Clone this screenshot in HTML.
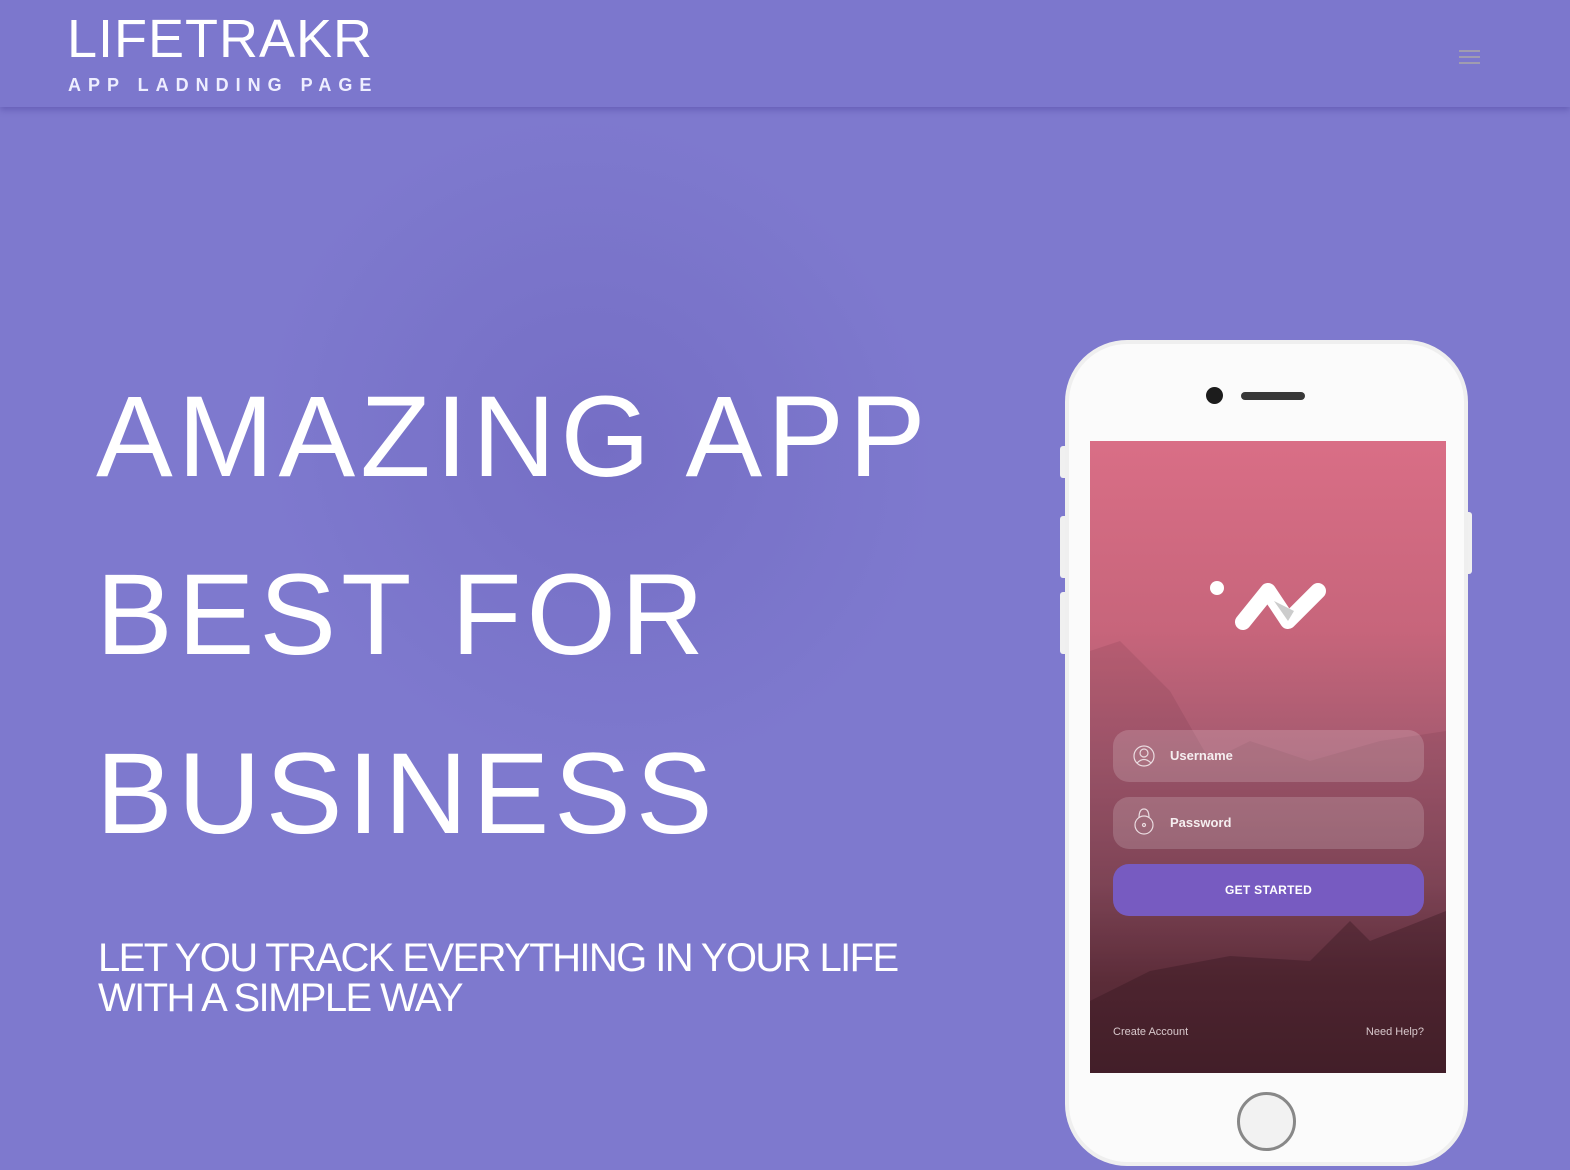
<!DOCTYPE html>
<html><head><meta charset="utf-8"><style>
*{margin:0;padding:0;box-sizing:border-box}
html,body{width:1570px;height:1170px;overflow:hidden}
body{background:#7e79ce;font-family:"Liberation Sans",sans-serif;position:relative;color:#fff}
.hdr{position:absolute;left:0;top:0;width:1570px;height:107px;background:#7c77cd;box-shadow:0 3px 6px rgba(60,50,140,.35)}
.logo{position:absolute;left:67px;top:8px;font-size:54px;letter-spacing:1px;font-weight:400}
.sub{position:absolute;left:68px;top:75px;font-size:18px;font-weight:700;letter-spacing:7px;color:#eef}
.ham{position:absolute;left:1459px;top:50px;width:21px}
.ham i{display:block;height:2px;background:#a09cb0;margin-bottom:4px}
.glow{position:absolute;left:250px;top:120px;width:700px;height:650px;background:radial-gradient(ellipse at center,rgba(100,90,180,.35),rgba(126,121,206,0) 70%);transform:rotate(35deg)}
.h1{position:absolute;left:96px;font-size:115px;letter-spacing:5px;font-weight:400;line-height:1;white-space:nowrap}
.p{position:absolute;left:98px;top:938px;font-size:40px;line-height:40px;letter-spacing:-1.6px}
.phone{position:absolute;left:1065px;top:340px;width:403px;height:826px;background:#fbfbfb;border-radius:62px;border:4px solid #efefef}
.btn-side{position:absolute;background:#f0f0f0;border-radius:3px}
.screen{position:absolute;left:1090px;top:441px;width:356px;height:632px;background:linear-gradient(#d96e86 0%,#c7657b 30%,#a45a6f 50%,#84495b 70%,#5e2f3b 85%,#4c2530 100%);overflow:hidden}
.field{position:absolute;left:23px;width:311px;height:52px;border-radius:16px;background:rgba(255,255,255,.17);font-size:13px;font-weight:700;color:#f5eef0}
.field span{position:absolute;left:57px;top:18px}
.gs{position:absolute;left:23px;top:423px;width:311px;height:52px;border-radius:16px;background:#775bc1;font-size:12px;font-weight:700;text-align:center;line-height:52px;letter-spacing:.3px}
.ft{position:absolute;top:585px;font-size:11px;color:#d8c8cc}
</style></head><body>
<div class="glow"></div>
<div class="hdr">
<div class="logo">LIFETRAKR</div>
<div class="sub">APP LADNDING PAGE</div>
<div class="ham"><i></i><i></i><i></i></div>
</div>
<div class="h1" style="top:380px">AMAZING APP</div>
<div class="h1" style="top:558px">BEST FOR</div>
<div class="h1" style="top:737px">BUSINESS</div>
<div class="p">LET YOU TRACK EVERYTHING IN YOUR LIFE<br>WITH A SIMPLE WAY</div>

<div class="btn-side" style="left:1060px;top:446px;width:8px;height:32px"></div>
<div class="btn-side" style="left:1060px;top:516px;width:8px;height:62px"></div>
<div class="btn-side" style="left:1060px;top:592px;width:8px;height:62px"></div>
<div class="btn-side" style="left:1465px;top:512px;width:7px;height:62px"></div>
<div class="phone"></div>
<div style="position:absolute;left:1206px;top:387px;width:17px;height:17px;border-radius:50%;background:#1c1c1c"></div>
<div style="position:absolute;left:1241px;top:392px;width:64px;height:8px;border-radius:4px;background:#383838"></div>
<div style="position:absolute;left:1237px;top:1092px;width:59px;height:59px;border-radius:50%;border:3px solid #888;background:#f2f2f2"></div>

<div class="screen">
<svg width="356" height="632" style="position:absolute;left:0;top:0">
<path d="M0 210 L30 200 L80 250 L120 320 L160 300 L220 320 L290 300 L356 290 L356 632 L0 632Z" fill="rgba(80,30,50,.12)"/>
<path d="M0 560 L60 530 L140 515 L220 520 L260 480 L280 500 L356 470 L356 632 L0 632Z" fill="rgba(50,20,28,.35)"/>
<circle cx="127" cy="147" r="7" fill="#fff"/>
<path d="M153 181 L178 150 L198 180 L228 150" stroke="#fff" stroke-width="16" fill="none" stroke-linecap="round" stroke-linejoin="round"/>
<path d="M184 160 L198 180 L204 170Z" fill="#ccc"/>
<g stroke="#e6d4da" stroke-width="1.2" fill="none">
<circle cx="54" cy="315" r="10"/><circle cx="54" cy="312" r="4"/><path d="M47 322 Q54 315 61 322"/>
<circle cx="54" cy="384" r="9"/><circle cx="54" cy="384" r="1.5"/><path d="M49 377 Q49 368 54 368 Q59 368 59 377"/>
</g>
</svg>
<div class="field" style="top:289px"><span>Username</span></div>
<div class="field" style="top:356px"><span>Password</span></div>
<div class="gs">GET STARTED</div>
<div class="ft" style="left:23px">Create Account</div>
<div class="ft" style="right:22px">Need Help?</div>
</div>
</body></html>
